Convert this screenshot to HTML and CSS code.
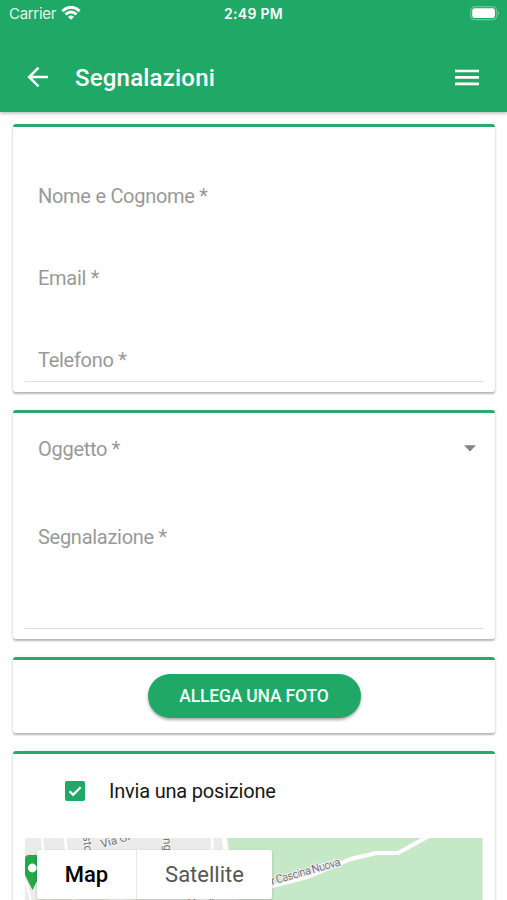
FILE: index.html
```html
<!DOCTYPE html>
<html lang="it">
<head>
<meta charset="utf-8">
<title>Segnalazioni</title>
<link rel="stylesheet" href="styles.css">
</head>
<body>
<header class="header">
  <div class="status">
    <div class="carrier"><span>Carrier</span>
      <svg width="20" height="14" viewBox="0 0 20 14" fill="none" stroke="#fff" stroke-width="2.9"><path d="M1.3 5.1Q10-2.5 18.7 5.1M4.5 8.4Q10 3.6 15.5 8.4"/><path d="M7 10.9Q10 8.3 13 10.9L10 13.8Z" fill="#fff" stroke="none"/></svg>
    </div>
    <span class="clock">2:49 PM</span>
    <svg class="battery" width="30" height="15" viewBox="0 0 30 15"><rect x=".7" y=".7" width="26" height="13" rx="4" fill="none" stroke="#6cc598" stroke-width="1.2"/><rect x="2.2" y="2.3" width="22.8" height="9.8" rx="2.4" fill="#fff"/><path d="M28 5.3Q30 7.2 28 9.3Z" fill="#8fd2b1"/></svg>
  </div>
  <nav class="toolbar">
    <svg class="back" width="22" height="22" viewBox="0 0 22 22" fill="none" stroke="#fff" stroke-width="2.5"><path d="M21 11H2.5M11.5 1.7L2.2 11L11.5 20.3"/></svg>
    <h1>Segnalazioni</h1>
    <svg class="menu" width="24" height="17" viewBox="0 0 24 17" stroke="#fff" stroke-width="2.7"><path d="M0 2H24M0 8.4H24M0 14.8H24"/></svg>
  </nav>
</header>
<main>
  <section class="card contact">
    <div class="field"><label class="name">Nome e Cognome *</label></div>
    <div class="field"><label class="email">Email *</label></div>
    <div class="field lined"><label class="phone">Telefono *</label></div>
  </section>
  <section class="card report">
    <div class="select"><label class="subject">Oggetto *</label><svg width="12" height="7" viewBox="0 0 12 7"><path d="M0 .3H12L6 6.5Z" fill="#858585"/></svg></div>
    <div class="textarea"><label class="message">Segnalazione *</label></div>
  </section>
  <section class="card photo"><button>ALLEGA UNA FOTO</button></section>
  <section class="card position">
    <div class="check">
      <svg width="20" height="20" viewBox="0 0 20 20"><rect width="20" height="20" rx="2" fill="#20a866"/><path d="M4.6 10.3L8.1 13.8L15.6 6.2" fill="none" stroke="#fff" stroke-width="2.3"/></svg>
      <span>Invia una posizione</span>
    </div>
    <div class="map">
      <svg class="tiles" width="457" height="62" viewBox="0 0 457 62">
        <rect width="457" height="62" fill="#ebebea"/>
        <path d="M202 0H457V62H214Z" fill="#c5e8c7"/>
        <g fill="none" stroke="#fff" stroke-width="2.5"><path d="M17 0L23 62M40 0L48 62M187 0L190 62"/><path d="M199 -2L203 30" stroke-width="5"/><path d="M0 42L6 62M85 62L135 58L185 62" stroke-width="2"/><path d="M225 54L282 39L326 21L351 15L373 15L404 -2" stroke-width="4"/></g>
        <g class="streets"><text transform="translate(58 -2) rotate(84)">stc</text><text transform="translate(77 10) rotate(-16)">Via Gr</text><text transform="translate(138 -6) rotate(87)">ung</text><text transform="translate(247 47) rotate(-16)" textLength="72">r Cascina Nuova</text><text transform="translate(163 69)">Verdi</text></g>
        <path d="M0 21Q0 17 4 17H11Q15 17 15 21V37Q13 41 7.5 52Q2 41 0 37Z" fill="#26a64b"/><circle cx="7.3" cy="30" r="4.4" fill="#fff"/>
      </svg>
      <div class="map-tabs"><span class="tab active">Map</span><span class="tab">Satellite</span></div>
    </div>
  </section>
</main>
</body>
</html>
```

FILE: styles.css
```css
* { box-sizing: border-box; }
body { margin: 0; height: 900px; overflow: hidden; background: #fff; font-family: Roboto, sans-serif; color: #171717; }
svg { display: block; flex: none; }
.header { height: 112px; background: #20a866; color: #fff; box-shadow: 0 1px 4px #0005; }
.status { height: 28px; display: grid; grid-template-columns: 1fr auto 1fr; align-items: center; padding: 0 7px 0 9px; font: 15px/28px Inter, sans-serif; }
.carrier { display: flex; align-items: center; gap: 5px; color: #e0f5e9; letter-spacing: -.3px; }
.carrier svg { margin-top: -2px; }
.clock { margin-right: 2px; font-size: 14px; font-weight: 600; letter-spacing: .3px; }
.battery { justify-self: end; margin-top: -1px; }
.toolbar { height: 84px; display: flex; align-items: center; padding: 14px 28px 0 27px; }
h1 { margin: 2px auto 0 26px; font-size: 24px; line-height: 32px; font-weight: 500; letter-spacing: .2px; }
main { padding: 12px 12px 0 13px; display: flex; flex-direction: column; gap: 18px; }
.card { border-top: 3px solid #2ba96d; border-radius: 3px; background: #fff; box-shadow: 0 2px 2px #0004, 0 0 4px #0001; flex: none; }
.contact { height: 268px; padding: 30px 12px 0; }
.field { height: 82px; padding: 26px 13px 0; }
.field.lined { height: 61px; border-bottom: 1px solid #dedede; }
label { display: block; width: max-content; font-size: 20px; line-height: 26px; letter-spacing: -.28px; color: #999; }
.report { height: 229px; padding: 0 12px; }
.select { display: flex; justify-content: space-between; align-items: center; height: 71px; padding: 0 7px 0 13px; }
.textarea { height: 145px; padding: 40px 13px; border-bottom: 1px solid #dedede; }
.photo { height: 76px; display: flex; justify-content: center; padding-top: 14px; }
button { width: 213px; height: 44px; border: 0; border-radius: 22px; background: #20a866; color: #f0fff6; font: 500 17.5px/42px Roboto, sans-serif; letter-spacing: -.18px; padding: 0; box-shadow: 0 2px 3px #0005; }
.position { height: 190px; padding: 0 12px; }
.check { display: flex; align-items: center; gap: 24px; height: 84px; padding: 0 0 10px 40px; font-size: 20px; letter-spacing: -.2px; }
.map { position: relative; height: 103px; overflow: hidden; background: #ebebea; }
.streets { font-size: 11.5px; fill: #757575; stroke: #f3f3f3; stroke-width: 2px; paint-order: stroke; }
.map-tabs { position: absolute; left: 12px; top: 12px; width: 235px; height: 49px; display: flex; background: #fff; border-radius: 2px; box-shadow: 0 1px 3px #0003; }
.tab { display: flex; align-items: center; justify-content: center; flex: 1; font-size: 22px; color: #565656; }
.active { flex: 0 0 100px; color: #000; font-weight: 500; border-right: 1px solid #e8e8e8; }
```
